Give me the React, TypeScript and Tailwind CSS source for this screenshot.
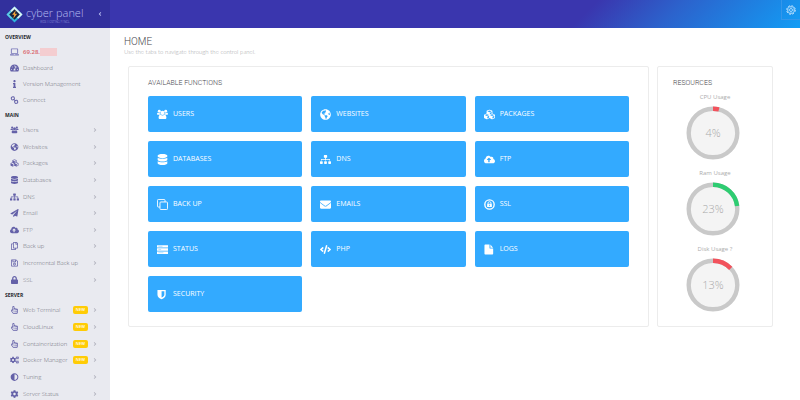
import type { ComponentType } from "react";
import {
  FaAdjust,
  FaAngleLeft,
  FaAngleRight,
  FaCloudUploadAlt,
  FaCode,
  FaCog,
  FaCogs,
  FaCubes,
  FaDatabase,
  FaEnvelope,
  FaGlobeAmericas,
  FaInfo,
  FaLaptop,
  FaLock,
  FaPaperPlane,
  FaRegCopy,
  FaRegHandPointer,
  FaRegSave,
  FaSitemap,
  FaTachometerAlt,
} from "react-icons/fa";

type Icon = ComponentType<{ className?: string }>;

/* ---------------- ICONS ---------------- */

function UsersGroup({ className }: { className?: string }) {
  return (
    <svg viewBox="0 0 24 24" className={className} fill="currentColor">
      <circle cx="5" cy="5" r="3.2" />
      <circle cx="19" cy="5" r="3.2" />
      <path d="M0 11.5C0 9 1 8 2.2 8 3 8.7 4 9.1 5 9.1c.7 0 1.3-.1 1.9-.4 0 1.6.4 2.6 1 3.6H1.5C.6 12.3 0 12 0 11.5Z" />
      <path d="M24 11.5C24 9 23 8 21.8 8 21 8.7 20 9.1 19 9.1c-.7 0-1.3-.1-1.9-.4 0 1.6-.4 2.6-1 3.6h6.4c.9 0 1.5-.3 1.5-.8Z" />
      <circle cx="12" cy="8.5" r="4.5" />
      <path d="M3.5 19c0-4 1.5-6.5 4.3-6.5 1.2 1 2.6 1.6 4.2 1.6s3-.6 4.2-1.6c2.8 0 4.3 2.5 4.3 6.5 0 2-1.2 3-3 3h-11c-1.8 0-3-1-3-3Z" />
    </svg>
  );
}

function HalfShield({ className }: { className?: string }) {
  return (
    <svg viewBox="0 0 24 24" className={className} fill="currentColor" fillRule="evenodd">
      <path d="M1 2h18v10.5c0 4.5-4 7.5-9 10-5-2.5-9-5.5-9-10ZM10 5v13.7c3.8-2 6-3.9 6-6.2V5Z" />
    </svg>
  );
}

function CloneSquares({ className }: { className?: string }) {
  return (
    <svg viewBox="0 0 24 24" className={className} fill="none" stroke="currentColor" strokeWidth="2">
      <path d="M6.5 17.5H3A2 2 0 0 1 1 15.5V3A2 2 0 0 1 3 1h12.5a2 2 0 0 1 2 2v3.5" />
      <rect x="6.5" y="6.5" width="16.5" height="16.5" rx="2" />
    </svg>
  );
}

function FilePage({ className }: { className?: string }) {
  return (
    <svg viewBox="0 0 24 24" className={className} fill="currentColor">
      <path d="M1 2.5C1 1.7 1.7 1 2.5 1H12v7.5c0 .8.7 1.5 1.5 1.5H20v11.5c0 .8-.7 1.5-1.5 1.5h-16c-.8 0-1.5-.7-1.5-1.5ZM14 1.2 19.8 8H14Z" />
    </svg>
  );
}

function ServerBars({ className }: { className?: string }) {
  return (
    <svg viewBox="0 0 24 24" className={className} fill="currentColor">
      <path d="M0 2.5h24v5.3H0ZM0 9.4h24v5.3H0ZM0 16.300h24v5.300H0Z" />
      <path d="M3 5.200h9M3 12.100h6M3 19h11" stroke="#33aaff" strokeWidth=".7" />
    </svg>
  );
}

function ChainLink({ className }: { className?: string }) {
  return (
    <svg viewBox="0 0 24 24" className={className} fill="none" stroke="currentColor" strokeWidth="3">
      <rect x="2.5" y="2.5" width="9" height="9" rx="3.5" transform="rotate(-12 7 7)" />
      <rect x="12.5" y="13" width="9" height="9" rx="3.5" transform="rotate(-12 17 17.5)" />
      <path d="m9 9 6 6.5" />
    </svg>
  );
}

function LockCircle({ className }: { className?: string }) {
  return (
    <svg viewBox="0 0 24 24" className={className} fill="none" stroke="currentColor">
      <circle cx="12" cy="12" r="10.2" strokeWidth="3" />
      <path d="M8.8 11V9a3.2 3.2 0 0 1 6.4 0v2" strokeWidth="1.8" />
      <rect x="6.8" y="10.5" width="10.4" height="7.2" rx="1" fill="currentColor" stroke="none" />
      <path d="M12 12.5v3" stroke="#33aaff" strokeWidth="1.6" />
    </svg>
  );
}

function OutlineGear({ className }: { className?: string }) {
  return (
    <svg viewBox="0 0 24 24" className={className} fill="none" stroke="currentColor">
      <circle cx="12" cy="12" r="10.3" strokeWidth="2.4" strokeDasharray="4.6 3.49" />
      <circle cx="12" cy="12" r="8.4" strokeWidth="1.8" />
      <circle cx="12" cy="12" r="3.6" strokeWidth="1.8" />
      <path d="M12 4v4.5M12 15.5V20M4 12h4.5M15.5 12H20" strokeWidth="1.2" />
    </svg>
  );
}

function Logo() {
  return (
    <svg viewBox="0 0 32 32" className="h-[17px] w-[17px] shrink-0" aria-hidden="true">
      <path d="M16 1 31 16 16 31 1 16Z" fill="#2fb5dc" />
      <path d="M16 1 31 16 23 24 8 9Z" fill="#d9f3f5" />
      <path d="M1 16 8 9 16 17 9 24Z" fill="#5ccbe5" />
      <path d="M16 6 26 16 16 26 6 16Z" fill="#17243f" />
      <path d="M18.5 8 11.5 16.5H15.5L13.5 24 21 14.8H16.8Z" fill="#f6a63b" />
    </svg>
  );
}

/* ---------------- DATA ---------------- */

type MenuItem = { label: string; icon: Icon; isNew?: boolean };

const overviewItems: MenuItem[] = [
  { label: "Dashboard", icon: FaTachometerAlt },
  { label: "Version Management", icon: FaInfo },
  { label: "Connect", icon: ChainLink },
];

const mainItems: MenuItem[] = [
  { label: "Users", icon: UsersGroup },
  { label: "Websites", icon: FaGlobeAmericas },
  { label: "Packages", icon: FaCubes },
  { label: "Databases", icon: FaDatabase },
  { label: "DNS", icon: FaSitemap },
  { label: "Email", icon: FaPaperPlane },
  { label: "FTP", icon: FaCloudUploadAlt },
  { label: "Back up", icon: FaRegCopy },
  { label: "Incremental Back up", icon: FaRegSave },
  { label: "SSL", icon: FaLock },
];

const serverItems: MenuItem[] = [
  { label: "Web Terminal", icon: FaRegHandPointer, isNew: true },
  { label: "CloudLinux", icon: FaRegHandPointer, isNew: true },
  { label: "Containerization", icon: FaRegHandPointer, isNew: true },
  { label: "Docker Manager", icon: FaCogs, isNew: true },
  { label: "Tuning", icon: FaAdjust },
  { label: "Server Status", icon: FaCog },
];

const functions: MenuItem[] = [
  { label: "USERS", icon: UsersGroup },
  { label: "WEBSITES", icon: FaGlobeAmericas },
  { label: "PACKAGES", icon: FaCubes },
  { label: "DATABASES", icon: FaDatabase },
  { label: "DNS", icon: FaSitemap },
  { label: "FTP", icon: FaCloudUploadAlt },
  { label: "BACK UP", icon: CloneSquares },
  { label: "EMAILS", icon: FaEnvelope },
  { label: "SSL", icon: LockCircle },
  { label: "STATUS", icon: ServerBars },
  { label: "PHP", icon: FaCode },
  { label: "LOGS", icon: FilePage },
  { label: "SECURITY", icon: HalfShield },
];

const resources = [
  { label: "CPU Usage", value: 4, color: "#f2525c" },
  { label: "Ram Usage", value: 23, color: "#2ecc71" },
  { label: "Disk Usage ?", value: 13, color: "#f2525c" },
];

/* ---------------- SIDEBAR ---------------- */

function SidebarLink({ item, arrow }: { item: MenuItem; arrow?: boolean }) {
  return (
    <li className="flex items-center">
      <a href="#" className="flex flex-1 items-center pr-3 pl-[10px]">
        <item.icon className="h-2 w-[9px] shrink-0 text-[#6461a8]" />
        <span className="ml-1 whitespace-nowrap">{item.label}</span>
        <span className="ml-auto flex items-center gap-1">
          {item.isNew && (
            <span className="rounded-xs bg-[#ffcc05] px-[3px] text-[4px] leading-[8px] font-semibold text-white">
              NEW
            </span>
          )}
          {arrow && <FaAngleRight className="h-[6px] w-[6px] text-[#b4b5c0]" />}
        </span>
      </a>
    </li>
  );
}

function SidebarHeading({ children }: { children: string }) {
  return (
    <h2 className="pl-[5px] text-[5px] leading-[14px] font-bold text-[#25262d]">{children}</h2>
  );
}

function Sidebar() {
  return (
    <aside className="w-[110px] shrink-0 bg-[#e9eaf0] text-[6px] leading-[8px] font-light text-[#6c6d78]">
      <div className="flex h-7 items-center bg-[#32309d] pr-2 pl-[6px] text-[#b7bdf0]">
        <Logo />
        <div className="ml-[3px] flex flex-col items-center">
          <span className="text-[11px] leading-[15px] font-light whitespace-nowrap">cyber panel</span>
          <span className="text-[3px] leading-[4px] text-[#a3a4e0]">WEB HOSTING PANEL</span>
        </div>
        <button type="button" aria-label="Collapse menu" className="ml-auto">
          <FaAngleLeft className="h-[6px] w-[4px]" />
        </button>
      </div>

      <nav className="pt-[2px]">
        <SidebarHeading>OVERVIEW</SidebarHeading>
        <ul className="grid h-16 auto-rows-fr">
          <li className="flex items-center pl-[10px]">
            <FaLaptop className="h-2 w-[9px] shrink-0 text-[#7775b8]" />
            <span className="ml-1 w-[34px] bg-linear-to-r from-transparent from-50% to-[#f4cdd0] to-50% font-semibold text-[#d9626a]">
              69.28.
            </span>
          </li>
          {overviewItems.map((item) => (
            <SidebarLink key={item.label} item={item} />
          ))}
        </ul>
        <SidebarHeading>MAIN</SidebarHeading>
        <ul className="grid h-[166px] auto-rows-fr">
          {mainItems.map((item) => (
            <SidebarLink key={item.label} item={item} arrow />
          ))}
        </ul>
        <SidebarHeading>SERVER</SidebarHeading>
        <ul className="grid h-[100px] auto-rows-fr">
          {serverItems.map((item) => (
            <SidebarLink key={item.label} item={item} arrow />
          ))}
        </ul>
      </nav>
    </aside>
  );
}

/* ---------------- RESOURCES ---------------- */

function Gauge({ label, value, color }: { label: string; value: number; color: string }) {
  return (
    <div className="flex flex-col items-center">
      <span className="pl-1 text-[6px] leading-[10px] text-[#acacac]">{label}</span>
      <div className="mt-1 grid place-items-center">
        <svg viewBox="0 0 54 54" className="col-start-1 row-start-1 h-[54px] w-[54px] -rotate-90">
          <circle cx="27" cy="27" r="24.3" fill="#f4f4f4" stroke="#c9c9c9" strokeWidth="4.4" />
          <circle
            cx="27"
            cy="27"
            r="24.3"
            fill="none"
            stroke={color}
            strokeWidth="4.4"
            pathLength={100}
            strokeDasharray={`${value} 100`}
          />
        </svg>
        <span className="z-10 col-start-1 row-start-1 text-[11px] leading-[12px] font-light text-[#aaaaaa]">
          {value}%
        </span>
      </div>
    </div>
  );
}

/* ---------------- PAGE ---------------- */

export default function App() {
  return (
    <div className="flex h-screen overflow-hidden bg-white font-['Open_Sans',sans-serif]">
      <Sidebar />

      <div className="flex min-w-0 flex-1 flex-col">
        <header className="flex h-7 shrink-0 justify-end bg-[linear-gradient(135deg,#3a36ae_0%,#3a36ae_68%,#2c62cc_80%,#129df5_100%)]">
          <button
            type="button"
            aria-label="Settings"
            className="flex h-5 w-[19px] items-center justify-center border-b border-l border-[#3596ea] text-[#c4e5ff]"
          >
            <OutlineGear className="h-[10px] w-[10px]" />
          </button>
        </header>

        <main className="pr-[27px] pl-[18px]">
          <div className="-ml-1 pt-2">
            <h1 className="font-[Roboto,sans-serif] text-[10px] leading-[12px] font-light text-[#4a4a4f]">HOME</h1>
            <p className="font-[Lato,sans-serif] text-[6px] leading-[7px] font-light text-[#a4a4a8]">
              Use the tabs to navigate through the control panel.
            </p>
          </div>

          <div className="mt-[11px] flex gap-2">
            <section className="flex-1 rounded-xs border border-[#ececec] px-[19px] pt-[11px] pb-[14px]">
              <h2 className="font-[Roboto,sans-serif] text-[7px] leading-[10px] font-light text-[#4a4a4f]">
                AVAILABLE FUNCTIONS
              </h2>
              <div className="mt-2 grid grid-cols-3 gap-[9px]">
                {functions.map((item) => (
                  <a
                    key={item.label}
                    href="#"
                    className="flex h-9 items-center gap-[5px] rounded-xs bg-[#33aaff] pl-[9px] text-[7px] leading-[10px] text-white"
                  >
                    <item.icon className="h-[11px] w-[11px]" />
                    {item.label}
                  </a>
                ))}
              </div>
            </section>

            <section className="w-[116px] rounded-xs border border-[#ececec] pt-[11px]">
              <h2 className="pl-[15px] font-[Roboto,sans-serif] text-[7px] leading-[10px] font-light text-[#4a4a4f]">
                RESOURCES
              </h2>
              <div className="mt-1 flex flex-col gap-2 pr-1">
                {resources.map((item) => (
                  <Gauge key={item.label} {...item} />
                ))}
              </div>
            </section>
          </div>
        </main>
      </div>
    </div>
  );
}
